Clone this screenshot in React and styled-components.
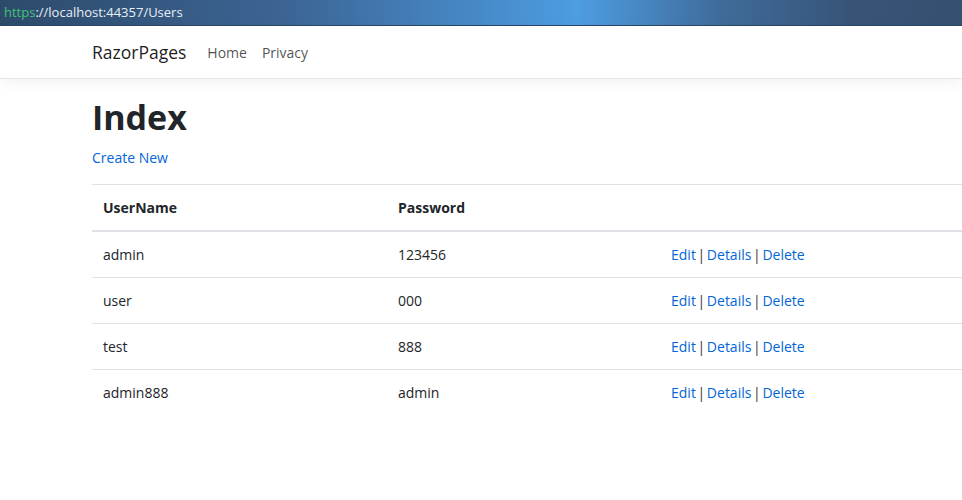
// Users index page (RazorPages template) with a browser address strip on top
import React from 'react';
import styled, { createGlobalStyle } from 'styled-components';

const GlobalStyle = createGlobalStyle`
  html, body {
    margin: 0;
    padding: 0;
    background: #fff;
    overflow: hidden;
  }
  body {
    font-family: "Segoe UI", "Open Sans", "Liberation Sans", sans-serif;
    font-size: 14px;
    line-height: 1.5;
    color: #212529;
  }
`;

export const AddressBar = styled.div`
  height: 25px;
  display: flex;
  align-items: center;
  padding-left: 4px;
  font-size: 13px;
  color: #e8eef5;
  background: linear-gradient(90deg, #2d4a6a 0%, #3c6595 30%, #4d9de2 60%, #3f6b9a 75%, #385579 88%, #34506f 100%);
  border-bottom: 1px solid #2a4664;
`;

export const Scheme = styled.span`
  color: #3fc27a;
`;

export const Navbar = styled.nav`
  height: 52px;
  display: flex;
  align-items: center;
  padding-left: 92px;
  background: #fff;
  border-bottom: 1px solid #e5e5e5;
  box-shadow: 0 4px 12px rgba(0, 0, 0, 0.05);
`;

export const Brand = styled.a`
  font-size: 17.5px;
  color: rgba(0, 0, 0, 0.9);
  margin-right: 21px;
  text-decoration: none;
`;

export const NavLink = styled.a`
  font-size: 14px;
  color: rgba(0, 0, 0, 0.7);
  margin-right: 15px;
  text-decoration: none;
`;

export const Main = styled.main`
  padding: 17px 0 0 92px;
`;

export const Title = styled.h1`
  margin: 0;
  font-size: 34px;
  line-height: 43px;
  font-weight: 700;
  color: #212529;
`;

export const Link = styled.a`
  color: #0366d6;
  text-decoration: none;
`;

export const CreateP = styled.p`
  margin: 8px 0 16px;
`;

export const Table = styled.table`
  width: 1110px;
  border-collapse: collapse;
`;

export const Th = styled.th`
  text-align: left;
  font-weight: 700;
  padding: 12px 11px;
  border-top: 1px solid #dee2e6;
  border-bottom: 2px solid #dee2e6;
  width: ${p => p.w || 'auto'};
`;

export const Td = styled.td`
  padding: 12px 11px;
  border-top: 1px solid #dee2e6;
  word-spacing: ${p => (p.actions ? '-2px' : 'normal')};
`;

const Sep = styled.span`
  color: #343a40;
`;

const users = [
  { name: 'admin', password: '123456' },
  { name: 'user', password: '000' },
  { name: 'test', password: '888' },
  { name: 'admin888', password: 'admin' },
];

export default function App() {
  return (
    <>
      <GlobalStyle />
      <AddressBar>
        <Scheme>https</Scheme>://localhost:44357/Users
      </AddressBar>
      <Navbar>
        <Brand>RazorPages</Brand>
        <NavLink>Home</NavLink>
        <NavLink>Privacy</NavLink>
      </Navbar>
      <Main>
        <Title>Index</Title>
        <CreateP>
          <Link>Create New</Link>
        </CreateP>
        <Table>
          <thead>
            <tr>
              <Th w="273px">UserName</Th>
              <Th w="251px">Password</Th>
              <Th />
            </tr>
          </thead>
          <tbody>
            {users.map(u => (
              <tr key={u.name}>
                <Td>{u.name}</Td>
                <Td>{u.password}</Td>
                <Td actions>
                  <Link>Edit</Link> <Sep>|</Sep> <Link>Details</Link> <Sep>|</Sep>{' '}
                  <Link>Delete</Link>
                </Td>
              </tr>
            ))}
          </tbody>
        </Table>
      </Main>
    </>
  );
}
